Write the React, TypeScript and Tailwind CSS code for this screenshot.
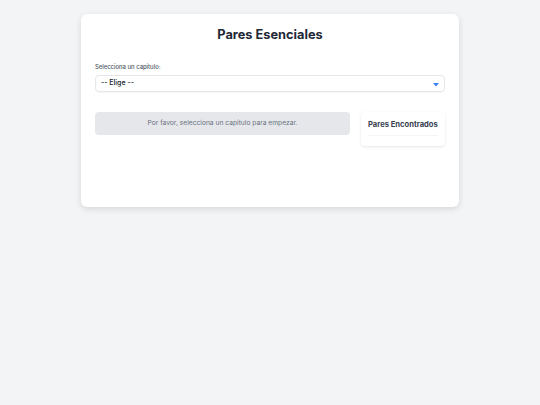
export default function App() {
  return (
    <div className="min-h-[405px] bg-[#f3f4f6] pt-[14px]" style={{ fontFamily: 'Inter, "Noto Sans", sans-serif' }}>
      <div className="mx-auto w-[378px] h-[193px] bg-white rounded-[6px] shadow-[0_2px_6px_rgba(0,0,0,0.12)] px-[14px] pt-[12px]">
        <h1 className="text-center text-[12.8px] leading-[18px] font-bold text-[#1f2937]">Pares Esenciales</h1>
        <div className="mt-[18px]">
          <label className="block text-[5.9px] leading-[10px] font-medium text-[#4b5563]">Selecciona un capítulo:</label>
          <div className="relative mt-[3px] h-[17px] border border-[#e5e7eb] shadow-[0_1px_1px_rgba(0,0,0,0.04)] rounded-[4px] flex items-center px-[5px]">
            <span className="text-[7px] font-medium text-[#111827]">-- Elige --</span>
            <svg className="absolute right-[5px] top-[7px]" width="6" height="4" viewBox="0 0 6 4">
              <path d="M0 0 L6 0 L3 3.5 Z" fill="#3b82f6" />
            </svg>
          </div>
        </div>
        <div className="mt-[20px] flex items-start gap-[11px]">
          <div className="flex-1 h-[23px] bg-[#e5e7eb] rounded-[4px] flex items-center justify-center">
            <span className="text-[6.7px] text-[#6b7280]">Por favor, selecciona un capítulo para empezar.</span>
          </div>
          <div className="w-[84px] h-[34px] bg-white rounded-[4px] shadow-[0_1px_3px_rgba(0,0,0,0.1)] px-[7px] pt-[7px]">
            <div className="whitespace-nowrap text-[7.6px] leading-[12px] font-bold text-[#374151] pb-[4px] border-b border-[#f3f4f6]">Pares Encontrados</div>
          </div>
        </div>
      </div>
    </div>
  );
}
